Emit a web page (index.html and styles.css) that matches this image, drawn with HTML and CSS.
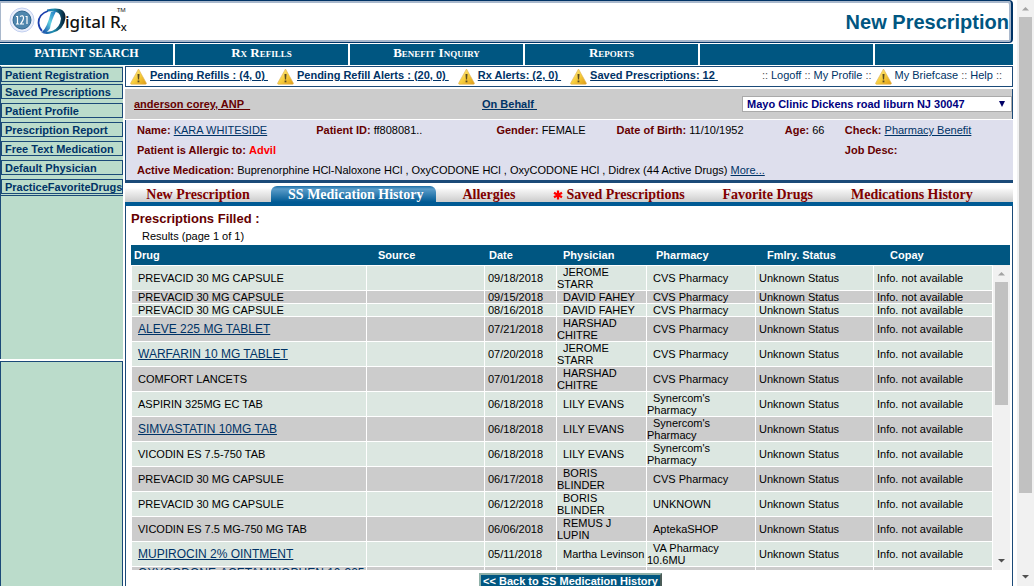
FILE: index.html
```html
<!DOCTYPE html>
<html lang="en">
<head>
<meta charset="utf-8">
<title>New Prescription</title>
<link rel="stylesheet" href="styles.css">
</head>
<body>
<svg class="defs" aria-hidden="true">
  <defs>
    <linearGradient id="gold" x1="0" y1="0" x2="1" y2="1">
      <stop offset="0" stop-color="#fff0a0"/><stop offset=".5" stop-color="#f7cf3e"/><stop offset="1" stop-color="#dd9a14"/>
    </linearGradient>
    <linearGradient id="letter" x1="0" y1="0" x2="1" y2="0">
      <stop offset="0" stop-color="#123fa8"/><stop offset=".5" stop-color="#1f8fb0"/><stop offset="1" stop-color="#04182e"/>
    </linearGradient>
    <linearGradient id="stem" x1="0" y1="1" x2="1" y2="0">
      <stop offset="0" stop-color="#0a3fa0"/><stop offset=".5" stop-color="#5fd0e0"/><stop offset="1" stop-color="#1a6fc0"/>
    </linearGradient>
    <symbol id="warn" viewBox="0 0 17 17">
      <path d="M8.500 1 L16.400 15.200 Q16.600 16.300 15.400 16.300 H1.600 Q.4 16.300 .6 15.200 Z" fill="url(#gold)" stroke="#e0b050" stroke-width=".6" stroke-linejoin="round"/>
      <path d="M7.500 6 H9.500 L9.100 11.400 H7.900 Z" fill="#5a4a20"/>
      <rect x="7.600" y="12.500" width="1.800" height="1.800" fill="#5a4a20"/>
    </symbol>
  </defs>
</svg>
<div class="page">
  <div class="app">
    <header class="banner">
      <svg class="logo" width="130" height="36" viewBox="0 1 130 36" role="img" aria-label="Digital Rx">
        <circle cx="22" cy="20" r="12" fill="#e9eefb" stroke="#c3d0f0"/>
        <circle cx="22" cy="20" r="9" fill="#4f86ad" stroke="#2f668f"/>
        <path d="M17.500 16 V24 M16 16.500 H17.500 M16 24 H19 M20 16.500 Q23.500 14.500 23.500 18 Q23.500 20 20.500 24 H24 M27 16 V24 M25.500 16.500 H27" fill="none" stroke="#fff" stroke-width="1.200"/>
        <path d="M48 11 Q38.500 14 38.500 23 Q39 28 42 31" fill="none" stroke="#1b3fae" stroke-width="1.800"/>
        <path d="M47 9.500 Q66 5.500 65.500 18 Q64 30 52 33 Q46 35 41 32.500 Q47 32 52 31 Q60 28 61 18.500 Q60.500 9.500 47 11.500 Z" fill="url(#letter)"/>
        <path d="M51 12 L56.500 10.500 Q51 21 50 28.500 Q46 34.500 42 32 Q47 28 51 12 Z" fill="url(#stem)"/>
        <text x="65" y="28" class="logo-name">igital R<tspan class="logo-sub" dy="3">x</tspan></text>
        <text x="117" y="12" class="logo-tm">TM</text>
      </svg>
      <h1 class="title">New Prescription</h1>
    </header>

    <nav class="menu">
      <a class="menu-item upper" href="#">PATIENT SEARCH</a>
      <a class="menu-item" href="#">Rx Refills</a>
      <a class="menu-item" href="#">Benefit Inquiry</a>
      <a class="menu-item" href="#">Reports</a>
      <span class="menu-item"></span>
      <span class="menu-item"></span>
    </nav>

    <div class="columns">
      <aside class="side">
        <nav class="side-top">
          <a class="side-link" href="#">Patient Registration</a>
          <a class="side-link" href="#">Saved Prescriptions</a>
          <a class="side-link" href="#">Patient Profile</a>
          <a class="side-link" href="#">Prescription Report</a>
          <a class="side-link" href="#">Free Text Medication</a>
          <a class="side-link" href="#">Default Physician</a>
          <a class="side-link" href="#">PracticeFavoriteDrugs</a>
        </nav>
        <div class="side-bottom"></div>
      </aside>

      <main class="main">
        <div class="alerts">
          <span class="alert"><svg class="warn"><use href="#warn"/></svg><a href="#">Pending Refills : (4, 0)&nbsp;</a></span>
          <span class="alert"><svg class="warn"><use href="#warn"/></svg><a href="#">Pending Refill Alerts : (20, 0)&nbsp;</a></span>
          <span class="alert"><svg class="warn"><use href="#warn"/></svg><a href="#">Rx Alerts: (2, 0)&nbsp;</a></span>
          <span class="alert"><svg class="warn"><use href="#warn"/></svg><a href="#">Saved Prescriptions: 12&nbsp;</a></span>
          <span class="account">
            <i>::</i><a href="#">Logoff</a><i>::</i><a href="#">My Profile</a><i>::</i><svg class="warn"><use href="#warn"/></svg><a href="#">My Briefcase</a><i>::</i><a href="#">Help</a><i>::</i>
          </span>
        </div>

        <div class="context">
          <a class="user" href="#">anderson corey, ANP&nbsp;&nbsp;</a>
          <a class="behalf" href="#">On Behalf&nbsp;</a>
          <label class="clinic">
            <select aria-label="Clinic"><option>Mayo Clinic Dickens road liburn NJ 30047</option></select>
            <svg class="caret" viewBox="0 0 6 6"><path d="M0 0 H6 L3 6 Z" fill="#000066"/></svg>
          </label>
        </div>

        <section class="patient">
          <span><b>Name:</b> <a href="#">KARA WHITESIDE</a></span>
          <span><b>Patient ID:</b> ff808081..</span>
          <span><b>Gender:</b> FEMALE</span>
          <span><b>Date of Birth:</b> 11/10/1952</span>
          <span><b>Age:</b> 66</span>
          <span><b>Check:</b> <a href="#">Pharmacy Benefit</a></span>
          <span class="allergy"><b>Patient is Allergic to:</b> <em>Advil</em></span>
          <span><b>Job Desc:</b></span>
          <span class="active-meds"><b>Active Medication:</b> Buprenorphine HCl-Naloxone HCl , OxyCODONE HCl , OxyCODONE HCl , Didrex (44 Active Drugs) <a href="#">More...</a></span>
        </section>

        <nav class="tabs">
          <button class="tab">New Prescription</button>
          <button class="tab current">SS Medication History</button>
          <button class="tab">Allergies</button>
          <button class="tab"><svg class="star" viewBox="0 0 10 10"><path d="M5 0.500 V9.500 M1 2.700 L9 7.300 M9 2.700 L1 7.300" stroke="#ff0000" stroke-width="2.200"/></svg>Saved Prescriptions</button>
          <button class="tab">Favorite Drugs</button>
          <button class="tab">Medications History</button>
        </nav>

        <section class="content">
          <h2 class="heading">Prescriptions Filled :</h2>
          <p class="count">Results (page 1 of 1)</p>
          <div class="results">
            <table class="drugs">
              <colgroup><col><col class="c-source"><col class="c-date"><col class="c-phys"><col class="c-pharm"><col class="c-status"><col class="c-copay"><col class="c-bar"></colgroup>
              <thead>
                <tr><th>Drug</th><th>Source</th><th>Date</th><th>Physician</th><th>Pharmacy</th><th>Fmlry. Status</th><th>Copay</th><th></th></tr>
              </thead>
              <tbody>
                <tr><td>PREVACID 30 MG CAPSULE</td><td></td><td>09/18/2018</td><td>JEROME<br>STARR</td><td>CVS Pharmacy</td><td>Unknown Status</td><td>Info. not available</td></tr>
                <tr><td>PREVACID 30 MG CAPSULE</td><td></td><td>09/15/2018</td><td>DAVID FAHEY</td><td>CVS Pharmacy</td><td>Unknown Status</td><td>Info. not available</td></tr>
                <tr><td>PREVACID 30 MG CAPSULE</td><td></td><td>08/16/2018</td><td>DAVID FAHEY</td><td>CVS Pharmacy</td><td>Unknown Status</td><td>Info. not available</td></tr>
                <tr><td><a href="#">ALEVE 225 MG TABLET</a></td><td></td><td>07/21/2018</td><td>HARSHAD<br>CHITRE</td><td>CVS Pharmacy</td><td>Unknown Status</td><td>Info. not available</td></tr>
                <tr><td><a href="#">WARFARIN 10 MG TABLET</a></td><td></td><td>07/20/2018</td><td>JEROME<br>STARR</td><td>CVS Pharmacy</td><td>Unknown Status</td><td>Info. not available</td></tr>
                <tr><td>COMFORT LANCETS</td><td></td><td>07/01/2018</td><td>HARSHAD<br>CHITRE</td><td>CVS Pharmacy</td><td>Unknown Status</td><td>Info. not available</td></tr>
                <tr><td>ASPIRIN 325MG EC TAB</td><td></td><td>06/18/2018</td><td>LILY EVANS</td><td>Synercom's<br>Pharmacy</td><td>Unknown Status</td><td>Info. not available</td></tr>
                <tr><td><a href="#">SIMVASTATIN 10MG TAB</a></td><td></td><td>06/18/2018</td><td>LILY EVANS</td><td>Synercom's<br>Pharmacy</td><td>Unknown Status</td><td>Info. not available</td></tr>
                <tr><td>VICODIN ES 7.5-750 TAB</td><td></td><td>06/18/2018</td><td>LILY EVANS</td><td>Synercom's<br>Pharmacy</td><td>Unknown Status</td><td>Info. not available</td></tr>
                <tr><td>PREVACID 30 MG CAPSULE</td><td></td><td>06/17/2018</td><td>BORIS<br>BLINDER</td><td>CVS Pharmacy</td><td>Unknown Status</td><td>Info. not available</td></tr>
                <tr><td>PREVACID 30 MG CAPSULE</td><td></td><td>06/12/2018</td><td>BORIS<br>BLINDER</td><td>UNKNOWN</td><td>Unknown Status</td><td>Info. not available</td></tr>
                <tr><td>VICODIN ES 7.5 MG-750 MG TAB</td><td></td><td>06/06/2018</td><td>REMUS J<br>LUPIN</td><td>AptekaSHOP</td><td>Unknown Status</td><td>Info. not available</td></tr>
                <tr><td><a href="#">MUPIROCIN 2% OINTMENT</a></td><td></td><td>05/11/2018</td><td>Martha Levinson</td><td>VA Pharmacy<br>10.6MU</td><td>Unknown Status</td><td>Info. not available</td></tr>
                <tr><td><a href="#">OXYCODONE-ACETAMINOPHEN 10-325</a></td><td></td><td></td><td></td><td></td><td></td><td></td></tr>
              </tbody>
            </table>
            <div class="bar bar-inner">
              <svg class="arrow" viewBox="0 0 17 17"><path d="M5 10.500 L8.500 7 L12 10.500 Z" fill="#a3a3a3"/></svg>
              <div class="thumb"></div>
              <svg class="arrow" viewBox="0 0 17 17"><path d="M5 6 L8.500 9.500 L12 6 Z" fill="#505050"/></svg>
            </div>
          </div>
          <button class="back">&lt;&lt; Back to SS Medication History</button>
        </section>
      </main>
    </div>
  </div>
  <div class="bar bar-page">
    <svg class="arrow" viewBox="0 0 17 17"><path d="M5 10.500 L8.500 7 L12 10.500 Z" fill="#a3a3a3"/></svg>
    <div class="thumb"></div>
    <svg class="arrow" viewBox="0 0 17 17"><path d="M5 6 L8.500 9.500 L12 6 Z" fill="#505050"/></svg>
  </div>
</div>
</body>
</html>
```

FILE: styles.css
```css
* { box-sizing: border-box; }

body {
  margin: 0;
  background: #fff;
  color: #000;
  font: 11px/14px "Liberation Sans", Arial, sans-serif;
}

a { color: #003366; }
svg { display: block; flex: none; }
.defs { position: absolute; width: 0; height: 0; }

.page { display: flex; height: 100vh; overflow: hidden; }
.app { flex: 1; min-width: 0; display: flex; flex-direction: column; padding-right: 4px; }

/* Banner */
.banner {
  flex: none;
  display: flex;
  justify-content: space-between;
  align-items: center;
  height: 43px;
  padding-right: 2px;
  border: solid #003366;
  border-width: 1px 2px 1px 0;
  border-radius: 0 4px 4px 0;
  box-shadow: inset -1px 1px 0 1px #a9b8cc, inset 0 -1px 0 1px #a9b8cc;
  background: #fff;
}
.logo { align-self: flex-start; }
.logo-name { font: 500 17px "Noto Sans", sans-serif; fill: #111; }
.logo-sub { font-size: 11px; }
.logo-tm { font: 6px "Noto Sans", sans-serif; fill: #111; }
.title { margin: 0; font-size: 20px; line-height: 24px; color: #005681; }

/* Main menu */
.menu {
  flex: none;
  display: grid;
  grid-template-columns: repeat(5, 173fr) 138fr;
  gap: 2px;
  height: 21px;
  margin: 1px 0;
}
.menu-item {
  background: #005681;
  color: #fff;
  font: bold 13px/18px "Liberation Serif", "Times New Roman", serif;
  font-variant: small-caps;
  text-align: center;
  text-decoration: none;
}
.upper { font-size: 12px; font-variant: normal; }

/* Side column */
.columns { flex: 1; min-height: 0; display: flex; gap: 2px; }
.side { flex: none; width: 123px; display: flex; flex-direction: column; gap: 2px; }
.side-top {
  flex: none;
  height: 293px;
  padding-top: 1px;
  border-left: 1px solid #1b4a78;
  background: #bbdccb;
}
.side-link {
  display: block;
  height: 15px;
  margin-bottom: 4px;
  padding-left: 3px;
  border: 1px solid #1b4a78;
  color: #003366;
  font-weight: bold;
  line-height: 14px;
  text-decoration: none;
  white-space: nowrap;
}
.side-link:first-child { margin-bottom: 2px; }
.side-link:last-child { box-shadow: 0 1px 0 #bbdccb, 0 2px 0 #1b4a78; }
.side-bottom { flex: 1; border: 1px solid #1b4a78; border-bottom: 0; background: #bbdccb; }

/* Alerts */
.main { flex: 1; min-width: 0; display: flex; flex-direction: column; }
.alerts {
  flex: none;
  display: flex;
  align-items: center;
  gap: 9px;
  height: 21px;
  padding: 0 10px 3px 4px;
  border: 1px solid #1b4a78;
  white-space: nowrap;
}
.warn { width: 17px; height: 17px; margin-top: 3px; }
.alert { display: flex; align-items: center; gap: 3px; height: 16px; font-weight: bold; }
.account { display: flex; align-items: center; gap: 3px; height: 16px; margin-left: auto; }
.account a { text-decoration: none; }
.account i { font-style: normal; color: #555; }

/* User and clinic */
.context {
  flex: none;
  display: flex;
  align-items: center;
  height: 30px;
  margin-top: 2px;
  padding-left: 9px;
  border-right: 1px solid #1b4a78;
  background: #ccc;
  font-weight: bold;
}
.user { flex: 348; color: #660000; }
.behalf { flex: 260; }
.user, .behalf { min-width: 0; }
.clinic { position: relative; flex: none; width: 270px; }
.clinic select {
  display: block;
  width: 100%;
  height: 16px;
  padding: 0 4px;
  border: 1px solid #aaa;
  background: #fff;
  color: #000080;
  font: bold 11px/14px "Liberation Sans", Arial, sans-serif;
  appearance: none;
}
.caret { position: absolute; top: 5px; right: 7px; width: 6px; height: 6px; }

/* Patient */
.patient {
  flex: none;
  display: grid;
  grid-template-columns: 179fr 180fr 120fr 168fr 60fr 168fr;
  grid-auto-rows: 20px;
  margin-top: 1px;
  padding-left: 11px;
  border: solid #1b4a78;
  border-width: 0 0 3px 1px;
  background: #dedfed;
  line-height: 21px;
  white-space: nowrap;
}
.patient b { color: #660000; }
.patient em { color: #ff0000; font-style: normal; font-weight: bold; }
.allergy { grid-column: span 5; }
.active-meds { grid-column: span 6; }

/* Tabs */
.tabs {
  flex: none;
  display: grid;
  grid-template-columns: 146fr 165fr 105fr 155fr 142fr 146fr 28fr;
  height: 20px;
  margin-top: 3px;
  border-bottom: 4px solid #005a94;
  background: linear-gradient(#fff 2px, #f4f4f4 4px, #ccc);
}
.tab {
  display: flex;
  align-items: center;
  justify-content: center;
  gap: 3px;
  height: 16px;
  padding: 1px 0 0;
  border: 0;
  background: none;
  color: #800000;
  font: bold 14px/16px "Liberation Serif", "Times New Roman", serif;
  white-space: nowrap;
}
.current {
  padding-left: 4px;
  border-radius: 6px 6px 0 0;
  background: linear-gradient(#1a6da6, #5a9cc9 3px, #005a94);
  color: #fff;
}
.star { width: 10px; height: 10px; }

/* Results */
.content {
  flex: 1;
  min-height: 0;
  display: flex;
  flex-direction: column;
  padding: 5px 2px 0 5px;
  border: solid #1b4a78;
  border-width: 0 1px;
}
.heading { margin: 0; color: #660000; font-size: 13px; line-height: 15px; }
.count { margin: 3px 0 2px 11px; line-height: 14px; }
.results { position: relative; flex: none; height: 325px; overflow: hidden; }
.drugs { width: 100%; table-layout: fixed; border-collapse: separate; border-spacing: 0; }
.c-source { width: 118px; }
.c-date { width: 72px; }
.c-phys { width: 90px; }
.c-pharm { width: 109px; }
.c-status { width: 118px; }
.c-copay { width: 119px; }
.c-bar { width: 18px; }

.drugs th {
  height: 20px;
  padding: 0 0 0 12px;
  background: #005681;
  color: #fff;
  line-height: 20px;
  text-align: left;
  white-space: nowrap;
}
.drugs th:nth-child(1) { padding-left: 3px; }
.drugs th:nth-child(3) { padding-left: 5px; }
.drugs th:nth-child(4) { padding-left: 7px; }
.drugs th:nth-child(5) { padding-left: 10px; }
.drugs th:nth-child(7) { padding-left: 17px; }

.drugs td {
  padding: 0 0 0 3px;
  border: solid #fff;
  border-width: 1px 0 0 1px;
  background: #dce7e1;
  line-height: 12px;
  white-space: nowrap;
}
.drugs tr:nth-child(even) td { background: #ccc; }
.drugs td:nth-child(1) { padding-left: 6px; }
.drugs td:nth-child(4), .drugs td:nth-child(5) { padding-left: 0; text-indent: 6px; }
.drugs a { font-size: 12px; }

.back {
  align-self: center;
  flex: none;
  margin-top: 3px;
  padding: 0 2px;
  border: 2px outset #8fb0a8;
  background: #005681;
  color: #fff;
  font: bold 11px/12px "Liberation Sans", Arial, sans-serif;
}

/* Scroll bars */
.bar { display: flex; flex-direction: column; width: 17px; background: #f1f1f1; }
.bar .arrow { width: 17px; height: 17px; }
.bar .arrow:last-child { margin-top: auto; }
.thumb { margin: 0 2px; background: #c1c1c1; }
.bar-inner { position: absolute; top: 20px; right: 0; bottom: 0; }
.bar-inner .thumb { height: 123px; flex: none; }
.bar-page { flex: none; }
.bar-page .thumb { height: 476px; flex: none; }
```
